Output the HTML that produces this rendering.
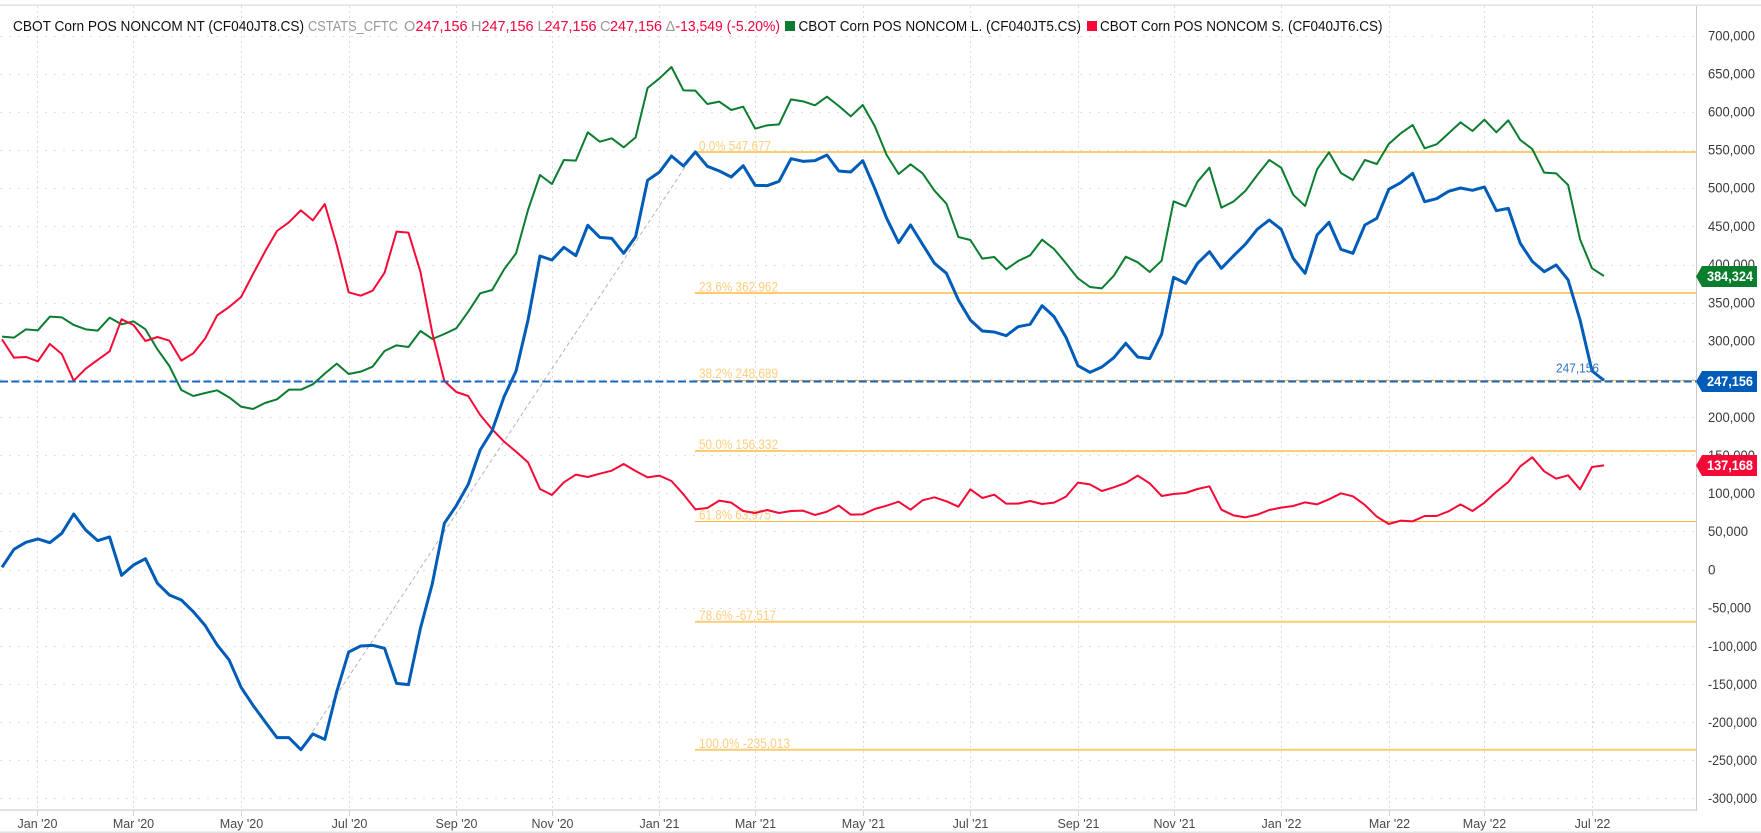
<!DOCTYPE html>
<html lang="en">
<head>
<meta charset="utf-8">
<title>CBOT Corn POS NONCOM NT</title>
<style>
html,body{margin:0;padding:0;background:#fff;width:1761px;height:833px;overflow:hidden}
svg{display:block;font-family:"Liberation Sans",sans-serif}
.ax{font-size:13.5px;fill:#3a3a3a}
.dt{font-size:12.5px;fill:#4a4a4a;text-anchor:middle}
.fib{font-size:14px;fill:#ffcf7f}
.hd{font-size:14.5px}
.bd{font-size:13.5px;font-weight:bold;fill:#fff}
</style>
</head>
<body>
<svg width="1761" height="833" viewBox="0 0 1761 833" xmlns="http://www.w3.org/2000/svg">
<rect width="1761" height="833" fill="#fff"/>
<rect x="0" y="4.5" width="1761" height="1.5" fill="#e2e2e2"/>
<rect x="0" y="831.5" width="1761" height="1.5" fill="#e2e2e2"/>

<!-- grid -->
<path fill="none" stroke="#e0e0e0" stroke-width="1" stroke-dasharray="2 7" d="M0 36.5H1696M0 74.5H1696M0 112.5H1696M0 150.5H1696M0 188.5H1696M0 226.5H1696M0 265.5H1696M0 303.5H1696M0 341.5H1696M0 379.5H1696M0 417.5H1696M0 455.5H1696M0 493.5H1696M0 531.5H1696M0 570.5H1696M0 608.5H1696M0 646.5H1696M0 684.5H1696M0 722.5H1696M0 760.5H1696M0 798.5H1696"/>
<path fill="none" stroke="#dcdcdc" stroke-width="1" stroke-dasharray="2 3" d="M37.5 6V810M133.5 6V810M241.5 6V810M349.5 6V810M456.5 6V810M552.5 6V810M659.5 6V810M755.5 6V810M863.5 6V810M970.5 6V810M1078.5 6V810M1174.5 6V810M1281.5 6V810M1389.5 6V810M1484.5 6V810M1592.5 6V810"/>

<!-- axes -->
<rect x="0" y="809" width="1697" height="2" fill="#e2e2e2"/>
<rect x="1696" y="6" width="1" height="805" fill="#cccccc"/>
<path fill="none" stroke="#d4d4d4" d="M37.5 811V816M133.5 811V816M241.5 811V816M349.5 811V816M456.5 811V816M552.5 811V816M659.5 811V816M755.5 811V816M863.5 811V816M970.5 811V816M1078.5 811V816M1174.5 811V816M1281.5 811V816M1389.5 811V816M1484.5 811V816M1592.5 811V816"/>

<!-- fibonacci levels -->
<path fill="none" stroke="#fdcb72" stroke-width="2" d="M695 152H1696M695 293H1696M695 451H1696M695 621.7H1696M695 749.7H1696"/>
<path fill="none" stroke="#f6b73f" stroke-width="1" d="M695 380.5H1696M695 521.5H1696"/>
<line x1="301" y1="749" x2="695" y2="152" stroke="#b4b4b4" stroke-width="1" stroke-dasharray="4 3"/>
<text class="fib" x="699" y="150.5" textLength="72" lengthAdjust="spacingAndGlyphs">0.0% 547,677</text>
<text class="fib" x="699" y="291.5" textLength="79" lengthAdjust="spacingAndGlyphs">23.6% 362,962</text>
<text class="fib" x="699" y="378" textLength="79" lengthAdjust="spacingAndGlyphs">38.2% 248,689</text>
<text class="fib" x="699" y="449" textLength="79" lengthAdjust="spacingAndGlyphs">50.0% 156,332</text>
<text class="fib" x="699" y="519.5" textLength="72" lengthAdjust="spacingAndGlyphs">61.8% 63,975</text>
<text class="fib" x="699" y="620" textLength="77" lengthAdjust="spacingAndGlyphs">78.6% -67,517</text>
<text class="fib" x="699" y="748" textLength="91" lengthAdjust="spacingAndGlyphs">100.0% -235,013</text>

<!-- series -->
<g transform="translate(2,0) scale(11.955,0.33333)" fill="none" stroke-linejoin="round" stroke-linecap="butt">
<polyline vector-effect="non-scaling-stroke" stroke="#0b7d2e" stroke-width="2" points="0,1010 1,1013 2,988 3,991 4,950 5,952 6,975 7,988 8,992 9,953 10,973 11,964 12,988 13,1048 14,1098 15,1170 16,1188 17,1179 18,1171 19,1192 20,1220 21,1227 22,1209 23,1198 24,1169 25,1169 26,1153 27,1121 28,1091 29,1122 30,1115 31,1100 32,1053 33,1036 34,1041 35,993 36,1017 37,1002 38,985 39,935 40,880 41,870 42,808 43,760 44,630 45,525 46,552 47,480 48,482 49,397 50,425 51,415 52,442 53,412 54,264 55,235 56,201 57,271 58,272 59,312 60,305 61,330 62,320 63,386 64,376 65,373 66,298 67,304 68,316 69,290 70,318 71,349 72,315 73,378 74,465 75,522 76,493 77,520 78,572 79,611 80,711 81,720 82,776 83,771 84,808 85,783 86,766 87,719 88,747 89,790 90,835 91,861 92,865 93,827 94,770 95,787 96,816 97,782 98,604 99,619 100,545 101,503 102,623 103,605 104,573 105,525 106,480 107,503 108,584 109,618 110,508 111,457 112,519 113,540 114,480 115,492 116,432 117,400 118,375 119,445 120,433 121,400 122,367 123,393 124,359 125,397 126,361 127,420 128,447 129,518 130,520 131,555 132,718 133,805 134,828"/>
<polyline vector-effect="non-scaling-stroke" stroke="#f50a37" stroke-width="2" points="0,1018 1,1073 2,1071 3,1084 4,1032 5,1062 6,1142 7,1106 8,1080 9,1054 10,958 11,975 12,1023 13,1011 14,1022 15,1082 16,1060 17,1015 18,946 19,921 20,891 21,822 22,755 23,693 24,667 25,631 26,661 27,612 28,735 29,877 30,887 31,872 32,818 33,695 34,698 35,815 36,1000 37,1143 38,1176 39,1188 40,1245 41,1288 42,1325 43,1355 44,1387 45,1467 46,1485 47,1447 48,1424 49,1431 50,1421 51,1412 52,1392 53,1413 54,1432 55,1427 56,1443 57,1483 58,1528 59,1524 60,1502 61,1508 62,1533 63,1539 64,1530 65,1539 66,1533 67,1532 68,1545 69,1535 70,1517 71,1544 72,1543 73,1527 74,1517 75,1505 76,1529 77,1501 78,1492 79,1504 80,1520 81,1468 82,1494 83,1484 84,1511 85,1511 86,1503 87,1512 88,1508 89,1490 90,1448 91,1453 92,1473 93,1462 94,1449 95,1427 96,1450 97,1488 98,1482 99,1479 100,1467 101,1459 102,1529 103,1546 104,1552 105,1544 106,1530 107,1523 108,1518 109,1507 110,1513 111,1498 112,1480 113,1489 114,1515 115,1550 116,1572 117,1562 118,1564 119,1548 120,1548 121,1534 122,1513 123,1533 124,1508 125,1475 126,1446 127,1399 128,1372 129,1414 130,1436 131,1426 132,1468 133,1401 134,1396"/>
<polyline vector-effect="non-scaling-stroke" stroke="#005cb9" stroke-width="3" points="0,1702 1,1648 2,1627 3,1617 4,1628 5,1600 6,1542 7,1590 8,1622 9,1611 10,1726 11,1695 12,1676 13,1750 14,1785 15,1800 16,1835 17,1877 18,1935 19,1980 20,2062 21,2116 22,2165 23,2213 24,2213 25,2249 26,2202 27,2218 28,2075 29,1956 30,1938 31,1936 32,1945 33,2050 34,2054 35,1885 36,1750 37,1570 38,1517 39,1453 40,1350 41,1292 42,1190 43,1113 44,960 45,768 46,780 47,742 48,767 49,676 50,712 51,715 52,760 53,710 54,541 55,516 56,468 57,498 58,456 59,499 60,513 61,531 62,497 63,556 64,557 65,544 66,476 67,484 68,482 69,465 70,513 71,516 72,482 73,565 74,655 75,728 76,675 77,733 78,790 79,820 80,900 81,960 82,993 83,996 84,1007 85,980 86,973 87,917 88,950 89,1012 90,1097 91,1117 92,1101 93,1073 94,1030 95,1071 96,1076 97,1003 98,832 99,850 100,790 101,755 102,805 103,768 104,733 105,688 106,660 107,688 108,775 109,820 110,705 111,667 112,748 113,760 114,675 115,655 116,568 117,548 118,520 119,605 120,596 121,574 122,564 123,571 124,561 125,632 126,625 127,730 128,784 129,815 130,795 131,840 132,960 133,1113 134,1141"/>
</g>

<!-- last price line -->
<line x1="0" y1="381.5" x2="1696" y2="381.5" stroke="#1665c1" stroke-width="2" stroke-dasharray="8 3.3"/>
<text x="1556" y="372.5" font-size="13" fill="#2f72c4" textLength="43" lengthAdjust="spacingAndGlyphs">247,156</text>

<!-- header legend -->
<text class="hd" x="13" y="31" fill="#111" textLength="291" lengthAdjust="spacingAndGlyphs">CBOT Corn POS NONCOM NT (CF040JT8.CS)</text>
<text class="hd" x="308" y="31" fill="#999" textLength="90" lengthAdjust="spacingAndGlyphs">CSTATS_CFTC</text>
<text class="hd" x="404" y="31" fill="#999">O</text>
<text class="hd" x="415.5" y="31" fill="#f5003d" textLength="52" lengthAdjust="spacingAndGlyphs">247,156</text>
<text class="hd" x="471" y="31" fill="#999">H</text>
<text class="hd" x="481.5" y="31" fill="#f5003d" textLength="52" lengthAdjust="spacingAndGlyphs">247,156</text>
<text class="hd" x="537.5" y="31" fill="#999">L</text>
<text class="hd" x="544.5" y="31" fill="#f5003d" textLength="52" lengthAdjust="spacingAndGlyphs">247,156</text>
<text class="hd" x="600" y="31" fill="#999">C</text>
<text class="hd" x="610" y="31" fill="#f5003d" textLength="52" lengthAdjust="spacingAndGlyphs">247,156</text>
<text class="hd" x="665.5" y="31" fill="#999">Δ</text>
<text class="hd" x="675.5" y="31" fill="#f5003d" textLength="104.5" lengthAdjust="spacingAndGlyphs">-13,549 (-5.20%)</text>
<rect x="785" y="21" width="10" height="10" fill="#0b7d2e"/>
<text class="hd" x="798.5" y="31" fill="#111" textLength="282.5" lengthAdjust="spacingAndGlyphs">CBOT Corn POS NONCOM L. (CF040JT5.CS)</text>
<rect x="1087" y="21" width="10" height="10" fill="#f50a37"/>
<text class="hd" x="1100" y="31" fill="#111" textLength="282.5" lengthAdjust="spacingAndGlyphs">CBOT Corn POS NONCOM S. (CF040JT6.CS)</text>

<!-- y axis labels -->
<g class="ax">
<text class="ax" x="1708" y="40.5" textLength="47" lengthAdjust="spacingAndGlyphs">700,000</text>
<text class="ax" x="1708" y="78.5" textLength="47" lengthAdjust="spacingAndGlyphs">650,000</text>
<text class="ax" x="1708" y="116.5" textLength="47" lengthAdjust="spacingAndGlyphs">600,000</text>
<text class="ax" x="1708" y="154.5" textLength="47" lengthAdjust="spacingAndGlyphs">550,000</text>
<text class="ax" x="1708" y="192.5" textLength="47" lengthAdjust="spacingAndGlyphs">500,000</text>
<text class="ax" x="1708" y="231" textLength="47" lengthAdjust="spacingAndGlyphs">450,000</text>
<text class="ax" x="1708" y="269" textLength="47" lengthAdjust="spacingAndGlyphs">400,000</text>
<text class="ax" x="1708" y="307.5" textLength="47" lengthAdjust="spacingAndGlyphs">350,000</text>
<text class="ax" x="1708" y="345.5" textLength="47" lengthAdjust="spacingAndGlyphs">300,000</text>
<text class="ax" x="1708" y="422" textLength="47" lengthAdjust="spacingAndGlyphs">200,000</text>
<text class="ax" x="1708" y="460" textLength="47" lengthAdjust="spacingAndGlyphs">150,000</text>
<text class="ax" x="1708" y="498" textLength="47" lengthAdjust="spacingAndGlyphs">100,000</text>
<text class="ax" x="1708" y="536" textLength="40" lengthAdjust="spacingAndGlyphs">50,000</text>
<text class="ax" x="1708" y="574.5">0</text>
<text class="ax" x="1708" y="612.5" textLength="43" lengthAdjust="spacingAndGlyphs">-50,000</text>
<text class="ax" x="1708" y="651" textLength="49" lengthAdjust="spacingAndGlyphs">-100,000</text>
<text class="ax" x="1708" y="689" textLength="49" lengthAdjust="spacingAndGlyphs">-150,000</text>
<text class="ax" x="1708" y="727" textLength="49" lengthAdjust="spacingAndGlyphs">-200,000</text>
<text class="ax" x="1708" y="765" textLength="49" lengthAdjust="spacingAndGlyphs">-250,000</text>
<text class="ax" x="1708" y="803" textLength="49" lengthAdjust="spacingAndGlyphs">-300,000</text>
</g>

<!-- badges -->
<polygon points="1696,276.5 1702,266 1757,266 1757,287 1702,287" fill="#0b7d2e"/>
<text class="bd" x="1707" y="281" textLength="46" lengthAdjust="spacingAndGlyphs">384,324</text>
<polygon points="1696,381.5 1702,371 1757,371 1757,392 1702,392" fill="#005cb9"/>
<text class="bd" x="1707" y="386" textLength="46" lengthAdjust="spacingAndGlyphs">247,156</text>
<polygon points="1696,465.5 1702,455 1757,455 1757,476 1702,476" fill="#f50a37"/>
<text class="bd" x="1707" y="470" textLength="46" lengthAdjust="spacingAndGlyphs">137,168</text>

<!-- x axis labels -->
<text class="dt" x="37.5" y="828">Jan '20</text>
<text class="dt" x="133.5" y="828">Mar '20</text>
<text class="dt" x="241.5" y="828">May '20</text>
<text class="dt" x="349.5" y="828">Jul '20</text>
<text class="dt" x="456.5" y="828">Sep '20</text>
<text class="dt" x="552.5" y="828">Nov '20</text>
<text class="dt" x="659.5" y="828">Jan '21</text>
<text class="dt" x="755.5" y="828">Mar '21</text>
<text class="dt" x="863.5" y="828">May '21</text>
<text class="dt" x="970.5" y="828">Jul '21</text>
<text class="dt" x="1078.5" y="828">Sep '21</text>
<text class="dt" x="1174.5" y="828">Nov '21</text>
<text class="dt" x="1281.5" y="828">Jan '22</text>
<text class="dt" x="1389.5" y="828">Mar '22</text>
<text class="dt" x="1484.5" y="828">May '22</text>
<text class="dt" x="1592.5" y="828">Jul '22</text>
</svg>
</body>
</html>
